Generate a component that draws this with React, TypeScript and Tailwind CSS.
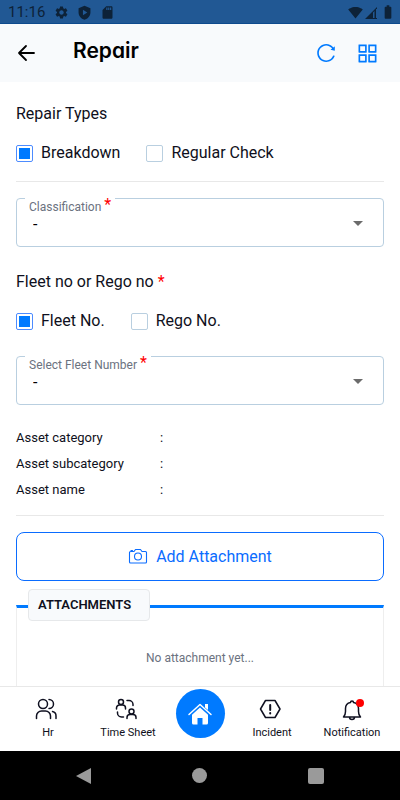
import { useState } from "react";
import type { ReactNode } from "react";
import { AiOutlineAppstore, AiOutlineReload } from "react-icons/ai";
import { MdBatteryFull, MdSdCard, MdSettings, MdSignalWifi4Bar } from "react-icons/md";

const strokeProps = {
  fill: "none",
  stroke: "currentColor",
  strokeWidth: 1.5,
  strokeLinecap: "round" as const,
  strokeLinejoin: "round" as const,
};

function StatusBar() {
  return (
    <div className="flex h-6 shrink-0 items-center border-b border-[#0d4a8d] bg-[#215894] px-2 pt-px text-[#0d2238]">
      <span className="text-[15px]">11:16</span>
      <div className="ml-[9px] flex items-center gap-2">
        <MdSettings size={15} />
        <svg width="15" height="15" viewBox="0 0 24 24" fill="currentColor" fillRule="evenodd">
          <path d="M12 1 2.500 5v7c0 5.500 4 10 9.500 11.500C17.500 22 21.500 17.500 21.500 12V5zM9.500 7.500l7 4.500-7 4.500z" />
        </svg>
        <MdSdCard size={15} />
      </div>
      <div className="-mr-1 ml-auto flex items-center gap-px">
        <MdSignalWifi4Bar size={15} />
        <svg width="15" height="15" viewBox="0 0 15 15" fill="currentColor">
          <path d="M1 14 13 2v2h-1v9h1v1zM9 7.500V13h1.500V6z" fillRule="evenodd" />
        </svg>
        <MdBatteryFull size={16} />
      </div>
    </div>
  );
}

function Header() {
  return (
    <header className="flex h-[58px] shrink-0 items-center bg-[#f8fafc] px-4">
      <button type="button" aria-label="Back" className="text-black">
        <svg width="20" height="20" viewBox="0 0 20 20" {...strokeProps} strokeWidth={1.8}>
          <path d="M10 3 3 10l7 7M3 10h15" />
        </svg>
      </button>
      <h1 className="ml-[37px] pb-1 font-['Inter',sans-serif] text-[21px] font-semibold text-black [font-feature-settings:'cv11']">
        Repair
      </h1>
      <div className="ml-auto flex items-center gap-[18px] pr-1 text-[#007aff]">
        <button type="button" aria-label="Refresh">
          <AiOutlineReload size={22} />
        </button>
        <button type="button" aria-label="Menu">
          <AiOutlineAppstore size={25} />
        </button>
      </div>
    </header>
  );
}

type CheckProps = { label: string; checked: boolean; onChange: () => void };

function Check({ label, checked, onChange }: CheckProps) {
  return (
    <label className="flex items-center gap-2 text-base">
      <input
        type="checkbox"
        checked={checked}
        onChange={onChange}
        className="size-[17px] appearance-none rounded-xs border border-[#b9cfe0] p-[2px] checked:border-[#4d8cff] checked:bg-[#007aff] checked:bg-clip-content"
      />
      {label}
    </label>
  );
}

function SelectField({ id, label }: { id: string; label: string }) {
  return (
    <div className="relative">
      <label htmlFor={id} className="absolute -top-px left-[9px] bg-white px-1 text-xs leading-5 text-[#6b7280]">
        {label} <span className="align-top text-base leading-4 text-[#ff0000]">*</span>
      </label>
      <select
        id={id}
        className="block h-[49px] w-full appearance-none rounded border border-[#b9cfe0] px-4 pt-1 text-base text-black"
      >
        <option>-</option>
      </select>
      <svg width="10" height="5" viewBox="0 0 10 5" className="pointer-events-none absolute top-[23px] right-[21px]">
        <path d="M0 0h10L5 5z" fill="#6b6b6b" />
      </svg>
    </div>
  );
}

function NavItem({ label, children }: { label: string; children: ReactNode }) {
  return (
    <a href="#" className="flex flex-1 flex-col items-center gap-1 pt-[10px] text-[11px] leading-4 text-[#0f1020]">
      {children}
      {label}
    </a>
  );
}

function BottomNav() {
  return (
    <nav className="flex h-[65px] shrink-0 border-t border-[#e8e8e8] bg-white px-2">
      <NavItem label="Hr">
        <svg width="28" height="24" viewBox="0 0 28 24" {...strokeProps}>
          <circle cx="9" cy="7" r="4.500" />
          <path d="M2.500 21.500v-2.500a5 5 0 0 1 5-5h4a5 5 0 0 1 5 5v2.500M15 2.500a4.500 4.500 0 0 1 0 9M18.500 14.500a4.500 4.500 0 0 1 3.500 4.500v2.500" />
        </svg>
      </NavItem>
      <NavItem label="Time Sheet">
        <svg width="28" height="24" viewBox="0 0 28 24" {...strokeProps}>
          <circle cx="7" cy="5" r="2.500" />
          <path d="M2.500 12v-1a3 3 0 0 1 3-3h3a3 3 0 0 1 3 3v1" />
          <circle cx="17.500" cy="14.500" r="2.500" />
          <path d="M13 21.500v-1a3 3 0 0 1 3-3h3a3 3 0 0 1 3 3v1M13 3.500h2a4 4 0 0 1 4 4v1M3.500 15v1a4 4 0 0 0 4 4h2" />
        </svg>
      </NavItem>
      <div className="flex w-16 justify-center pt-[2px]">
        <a href="#" aria-label="Home" className="flex size-[49px] items-center justify-center rounded-full bg-[#007aff] text-white">
          <svg width="26" height="24" viewBox="0 0 26 24" fill="currentColor">
            <path d="M13 5.500 5 12.800V21a1.500 1.500 0 0 0 1.500 1.500h4V16h5v6.500h4A1.500 1.500 0 0 0 21 21v-8.200z" />
            <path d="M18 2h3v6l-3-2.500z" />
            <path d="M2 12.500 13 2.500l11 10" {...strokeProps} />
          </svg>
        </a>
      </div>
      <NavItem label="Incident">
        <svg width="28" height="24" viewBox="0 0 28 24" {...strokeProps}>
          <path d="M7.500 3.500h9.500l5 8.500-5 8.500H7.500l-5-8.500z" />
          <path d="M12.200 8v5M12.200 16v.5" strokeWidth={2} />
        </svg>
      </NavItem>
      <NavItem label="Notification">
        <svg width="24" height="24" viewBox="0 0 24 24" {...strokeProps}>
          <path d="M3.500 20c1.500-1.500 2-3 2-5.500v-3c0-3.500 2-5.500 5-6a1.500 1.500 0 0 1 3 0c3 .5 5 2.500 5 6v3c0 2.500.5 4 2 5.500zM9.500 20a2.500 2.500 0 0 0 5 0" />
          <circle cx="20" cy="6" r="4" fill="#ff0000" stroke="none" />
        </svg>
      </NavItem>
    </nav>
  );
}

function SystemBar() {
  return (
    <div className="flex h-[49px] shrink-0 items-center justify-around bg-black px-[26px] text-[#9a9a9a]">
      <button type="button" aria-label="System back">
        <svg width="16" height="16" viewBox="0 0 16 16" fill="currentColor">
          <path d="M15 0v16L0 8z" />
        </svg>
      </button>
      <button type="button" aria-label="System home" className="size-[15px] rounded-full bg-current" />
      <button type="button" aria-label="Recent apps" className="size-4 rounded-xs bg-current" />
    </div>
  );
}

const assetRows = ["Asset category", "Asset subcategory", "Asset name"];

export default function App() {
  const [repairType, setRepairType] = useState("breakdown");
  const [lookup, setLookup] = useState("fleet");

  return (
    <div className="flex h-screen flex-col bg-white font-['Roboto',sans-serif] text-[#0f1020]">
      <StatusBar />
      <Header />

      <main className="min-h-0 flex-1 overflow-y-auto px-4 pt-5 pb-6 [scrollbar-width:none]">
        <h2 className="text-base">Repair Types</h2>
        <div className="mt-[15px] flex gap-[26px]">
          <Check label="Breakdown" checked={repairType === "breakdown"} onChange={() => setRepairType("breakdown")} />
          <Check label="Regular Check" checked={repairType === "regular"} onChange={() => setRepairType("regular")} />
        </div>

        <hr className="my-4 border-[#e8e8e8]" />

        <SelectField id="classification" label="Classification" />

        <h2 className="mt-[23px] text-base">
          Fleet no or Rego no <span className="text-[#ff0000]">*</span>
        </h2>
        <div className="mt-[15px] mb-[23px] flex gap-[26px]">
          <Check label="Fleet No." checked={lookup === "fleet"} onChange={() => setLookup("fleet")} />
          <Check label="Rego No." checked={lookup === "rego"} onChange={() => setLookup("rego")} />
        </div>

        <SelectField id="fleet-number" label="Select Fleet Number" />

        <dl className="mt-5 text-[13px] leading-[26px]">
          {assetRows.map((row) => (
            <div key={row} className="flex">
              <dt className="w-36">{row}</dt>
              <dd>:</dd>
            </div>
          ))}
        </dl>

        <hr className="mt-3 mb-4 border-[#e8e8e8]" />

        <button
          type="button"
          className="flex h-[49px] w-full items-center justify-center gap-2 rounded-lg border border-[#0a6cff] pt-px text-base text-[#0a6cff]"
        >
          <svg width="20" height="18" viewBox="0 0 20 18" {...strokeProps} strokeWidth={1.1}>
            <path d="M1.500 4.500a1 1 0 0 1 1-1h3.500l1.500-2h5l1.500 2h3.500a1 1 0 0 1 1 1V14a1 1 0 0 1-1 1h-15a1 1 0 0 1-1-1zM3 3.500v-1h1.500v1" />
            <circle cx="10" cy="8.500" r="3.500" />
          </svg>
          Add Attachment
        </button>

        <section className="relative mt-6 h-36 border-x border-b border-t-3 border-[#eeeeee] border-t-[#007aff]">
          <h3 className="absolute -top-[19px] left-[11px] rounded border border-[#e6e8ea] bg-[#f8fafc] py-[5px] pr-[18px] pl-[9px] text-[13px] leading-5 font-semibold">
            ATTACHMENTS
          </h3>
          <p className="pt-10 text-center text-xs leading-5 text-[#6b7280]">No attachment yet...</p>
        </section>
      </main>

      <BottomNav />
      <SystemBar />
    </div>
  );
}
